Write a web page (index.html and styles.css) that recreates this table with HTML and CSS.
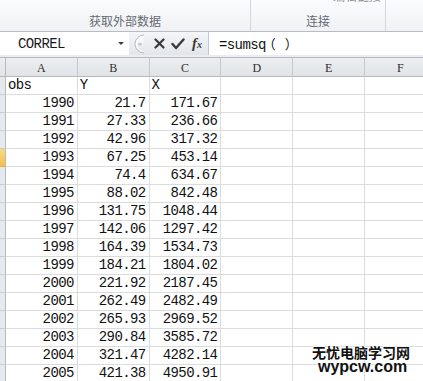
FILE: index.html
```html
<!DOCTYPE html>
<html lang="zh-CN">
<head>
<meta charset="utf-8">
<title>sumsq</title>
<link rel="stylesheet" href="styles.css">
</head>
<body>
<div class="app">
  <div class="ribbon">
    <div class="group g1"><span class="glabel">获取外部数据</span></div>
    <div class="group g2"><span class="gtop">编辑链接</span><span class="glabel">连接</span></div>
    <div class="group g3"></div>
  </div>
  <div class="fbar">
    <div class="namebox"><span class="name">CORREL</span><span class="dd"></span></div>
    <div class="fbtns">
      <svg class="knob" width="14" height="20" viewBox="0 0 14 20">
        <defs>
          <linearGradient id="kg" x1="0" y1="0" x2="0" y2="1">
            <stop offset="0" stop-color="#ffffff"/>
            <stop offset="1" stop-color="#dfe3e8"/>
          </linearGradient>
        </defs>
        <path d="M14 1 A9 9 0 0 0 14 19" fill="url(#kg)" stroke="#b7bcc4" stroke-width="1"/>
        <path d="M14 2.5 A7.5 7.5 0 0 0 14 17.5" fill="none" stroke="#ffffff" stroke-width="1"/>
        <rect x="8" y="9" width="4" height="2.5" rx="1" fill="#c5cad1"/>
      </svg>
      <svg class="ico x" width="11" height="11" viewBox="0 0 11 11">
        <path d="M1.5 1.5 L9.5 9.5 M9.5 1.5 L1.5 9.5" stroke="#3a3a3a" stroke-width="2.2" stroke-linecap="round"/>
      </svg>
      <svg class="ico ok" width="14" height="12" viewBox="0 0 14 12">
        <path d="M1.5 6 L5 10 L12.5 1.5" fill="none" stroke="#3a3a3a" stroke-width="2.4" stroke-linecap="round" stroke-linejoin="round"/>
      </svg>
      <span class="fx">f<span class="fxx">x</span></span>
    </div>
    <div class="finput">=sumsq<span class="cjk">（）</span></div>
  </div>
  <div class="sheet">
    <div class="hc corner"></div>
    <div class="hc">A</div><div class="hc">B</div><div class="hc">C</div><div class="hc">D</div><div class="hc">E</div><div class="hc">F</div>

    <div class="rh"></div><div class="c l">obs</div><div class="c l">Y</div><div class="c l">X</div><div class="c"></div><div class="c"></div><div class="c"></div>
    <div class="rh"></div><div class="c">1990</div><div class="c">21.7</div><div class="c">171.67</div><div class="c"></div><div class="c"></div><div class="c"></div>
    <div class="rh"></div><div class="c">1991</div><div class="c">27.33</div><div class="c">236.66</div><div class="c"></div><div class="c"></div><div class="c"></div>
    <div class="rh"></div><div class="c">1992</div><div class="c">42.96</div><div class="c">317.32</div><div class="c"></div><div class="c"></div><div class="c"></div>
    <div class="rh sel"></div><div class="c">1993</div><div class="c">67.25</div><div class="c">453.14</div><div class="c"></div><div class="c"></div><div class="c"></div>
    <div class="rh"></div><div class="c">1994</div><div class="c">74.4</div><div class="c">634.67</div><div class="c"></div><div class="c"></div><div class="c"></div>
    <div class="rh"></div><div class="c">1995</div><div class="c">88.02</div><div class="c">842.48</div><div class="c"></div><div class="c"></div><div class="c"></div>
    <div class="rh"></div><div class="c">1996</div><div class="c">131.75</div><div class="c">1048.44</div><div class="c"></div><div class="c"></div><div class="c"></div>
    <div class="rh"></div><div class="c">1997</div><div class="c">142.06</div><div class="c">1297.42</div><div class="c"></div><div class="c"></div><div class="c"></div>
    <div class="rh"></div><div class="c">1998</div><div class="c">164.39</div><div class="c">1534.73</div><div class="c"></div><div class="c"></div><div class="c"></div>
    <div class="rh"></div><div class="c">1999</div><div class="c">184.21</div><div class="c">1804.02</div><div class="c"></div><div class="c"></div><div class="c"></div>
    <div class="rh"></div><div class="c">2000</div><div class="c">221.92</div><div class="c">2187.45</div><div class="c"></div><div class="c"></div><div class="c"></div>
    <div class="rh"></div><div class="c">2001</div><div class="c">262.49</div><div class="c">2482.49</div><div class="c"></div><div class="c"></div><div class="c"></div>
    <div class="rh"></div><div class="c">2002</div><div class="c">265.93</div><div class="c">2969.52</div><div class="c"></div><div class="c"></div><div class="c"></div>
    <div class="rh"></div><div class="c">2003</div><div class="c">290.84</div><div class="c">3585.72</div><div class="c"></div><div class="c"></div><div class="c"></div>
    <div class="rh"></div><div class="c">2004</div><div class="c">321.47</div><div class="c">4282.14</div><div class="c"></div><div class="c"></div><div class="c"></div>
    <div class="rh"></div><div class="c">2005</div><div class="c">421.38</div><div class="c">4950.91</div><div class="c"></div><div class="c"></div><div class="c"></div>
  </div>
  <div class="wm">
    <div class="wm-cn">无忧电脑学习网</div>
    <div class="wm-en">wypcw.com</div>
  </div>
</div>
</body>
</html>
```

FILE: styles.css
```css
html, body {
  margin: 0;
  padding: 0;
  background: #ffffff;
}
.app {
  position: relative;
  width: 423px;
  height: 381px;
  overflow: hidden;
  font-family: "Liberation Mono", monospace;
}

/* ribbon */
.ribbon {
  display: flex;
  height: 31px;
  border-bottom: 1px solid #b9bdc3;
  background: linear-gradient(#fbfcfd, #eff1f4);
}
.group {
  display: flex;
  flex-direction: column;
  justify-content: flex-end;
  align-items: center;
  padding-bottom: 3px;
  box-sizing: border-box;
  border-right: 1px solid #d3d6db;
  overflow: hidden;
}
.g1 { width: 251px; }
.g2 { width: 135px; justify-content: space-between; }
.g3 { flex: 1; border-right: none; }
.glabel {
  font-family: "Noto Sans CJK SC", sans-serif;
  font-size: 12px;
  line-height: 14px;
  color: #646a72;
}
.gtop {
  align-self: flex-end;
  margin-top: -11px;
  margin-right: 4px;
  font-family: "Noto Sans CJK SC", sans-serif;
  font-size: 12px;
  line-height: 14px;
  color: #8a8f96;
}

/* formula bar */
.fbar {
  display: flex;
  height: 25px;
  box-sizing: border-box;
  padding-bottom: 2px;
  background: #e9ecf0;
}
.namebox {
  width: 129px;
  display: flex;
  align-items: center;
  background: #ffffff;
  box-sizing: border-box;
  padding-left: 18px;
}
.name {
  font-size: 14px;
  letter-spacing: -0.6px;
  color: #1a1a1a;
  flex: 1;
}
.dd {
  width: 0;
  height: 0;
  border-left: 3px solid transparent;
  border-right: 3px solid transparent;
  border-top: 3px solid #3c3c3c;
  margin-right: 5px;
}
.fbtns {
  width: 79px;
  display: flex;
  align-items: center;
  background: linear-gradient(#f4f6f8, #e2e6eb);
}
.knob { margin-left: 1px; }
.ico.x { margin-left: 10px; }
.ico.ok { margin-left: 6px; }
.fx {
  margin-left: 7px;
  font-family: "Liberation Serif", serif;
  font-style: italic;
  font-weight: bold;
  font-size: 15px;
  color: #3a3a3a;
  line-height: 1;
}
.fxx { font-size: 10px; }
.finput {
  flex: 1;
  background: #ffffff;
  border-left: 1px solid #c3c7cd;
  padding-left: 10px;
  font-size: 14px;
  letter-spacing: -0.6px;
  line-height: 23px;
  color: #111111;
}
.cjk {
  font-family: "Noto Sans CJK SC", sans-serif;
  font-size: 13px;
  letter-spacing: 9px;
  margin-left: -3px;
}

/* sheet */
.sheet {
  display: grid;
  grid-template-columns: 6px repeat(6, 71.8px);
  grid-template-rows: 20px;
  grid-auto-rows: 18px;
}
.hc {
  box-sizing: border-box;
  border-top: 1px solid #b6bac0;
  border-bottom: 1px solid #b6bac0;
  border-right: 1px solid #c4c8ce;
  background: linear-gradient(#eceef1, #e1e4e8);
  font-family: "Liberation Serif", serif;
  font-size: 12px;
  color: #2e2e2e;
  display: flex;
  align-items: center;
  justify-content: center;
  padding-top: 2px;
}
.hc.corner { border-right: 1px solid #b6bac0; }
.rh {
  box-sizing: border-box;
  border-right: 1px solid #b6bac0;
  border-bottom: 1px solid #c9ccd1;
  background: #e6e9ed;
}
.rh.sel {
  background: linear-gradient(#f8d98a, #f1c04e);
  border-bottom-color: #e2b04a;
}
.c {
  box-sizing: border-box;
  border-right: 1px solid #dadcdd;
  border-bottom: 1px solid #dadcdd;
  font-size: 14px;
  letter-spacing: -0.6px;
  line-height: 17px;
  color: #111111;
  text-align: right;
  padding-right: 3px;
  white-space: nowrap;
  overflow: hidden;
}
.c.l {
  text-align: left;
  padding-left: 2px;
  padding-right: 0;
}

/* watermark */
.wm {
  position: absolute;
  left: 312px;
  top: 345px;
  text-shadow: 0 0 2px #ffffff, 0 0 2px #ffffff, 0 0 3px #ffffff;
}
.wm-cn {
  font-family: "Noto Sans CJK SC", sans-serif;
  font-weight: bold;
  font-size: 14px;
  line-height: 14px;
  height: 14px;
  color: #111111;
}
.wm-en {
  margin-top: 1px;
  margin-left: 6px;
  font-family: "Liberation Sans", sans-serif;
  font-weight: bold;
  font-size: 16px;
  line-height: 13px;
  color: #111111;
}
```
